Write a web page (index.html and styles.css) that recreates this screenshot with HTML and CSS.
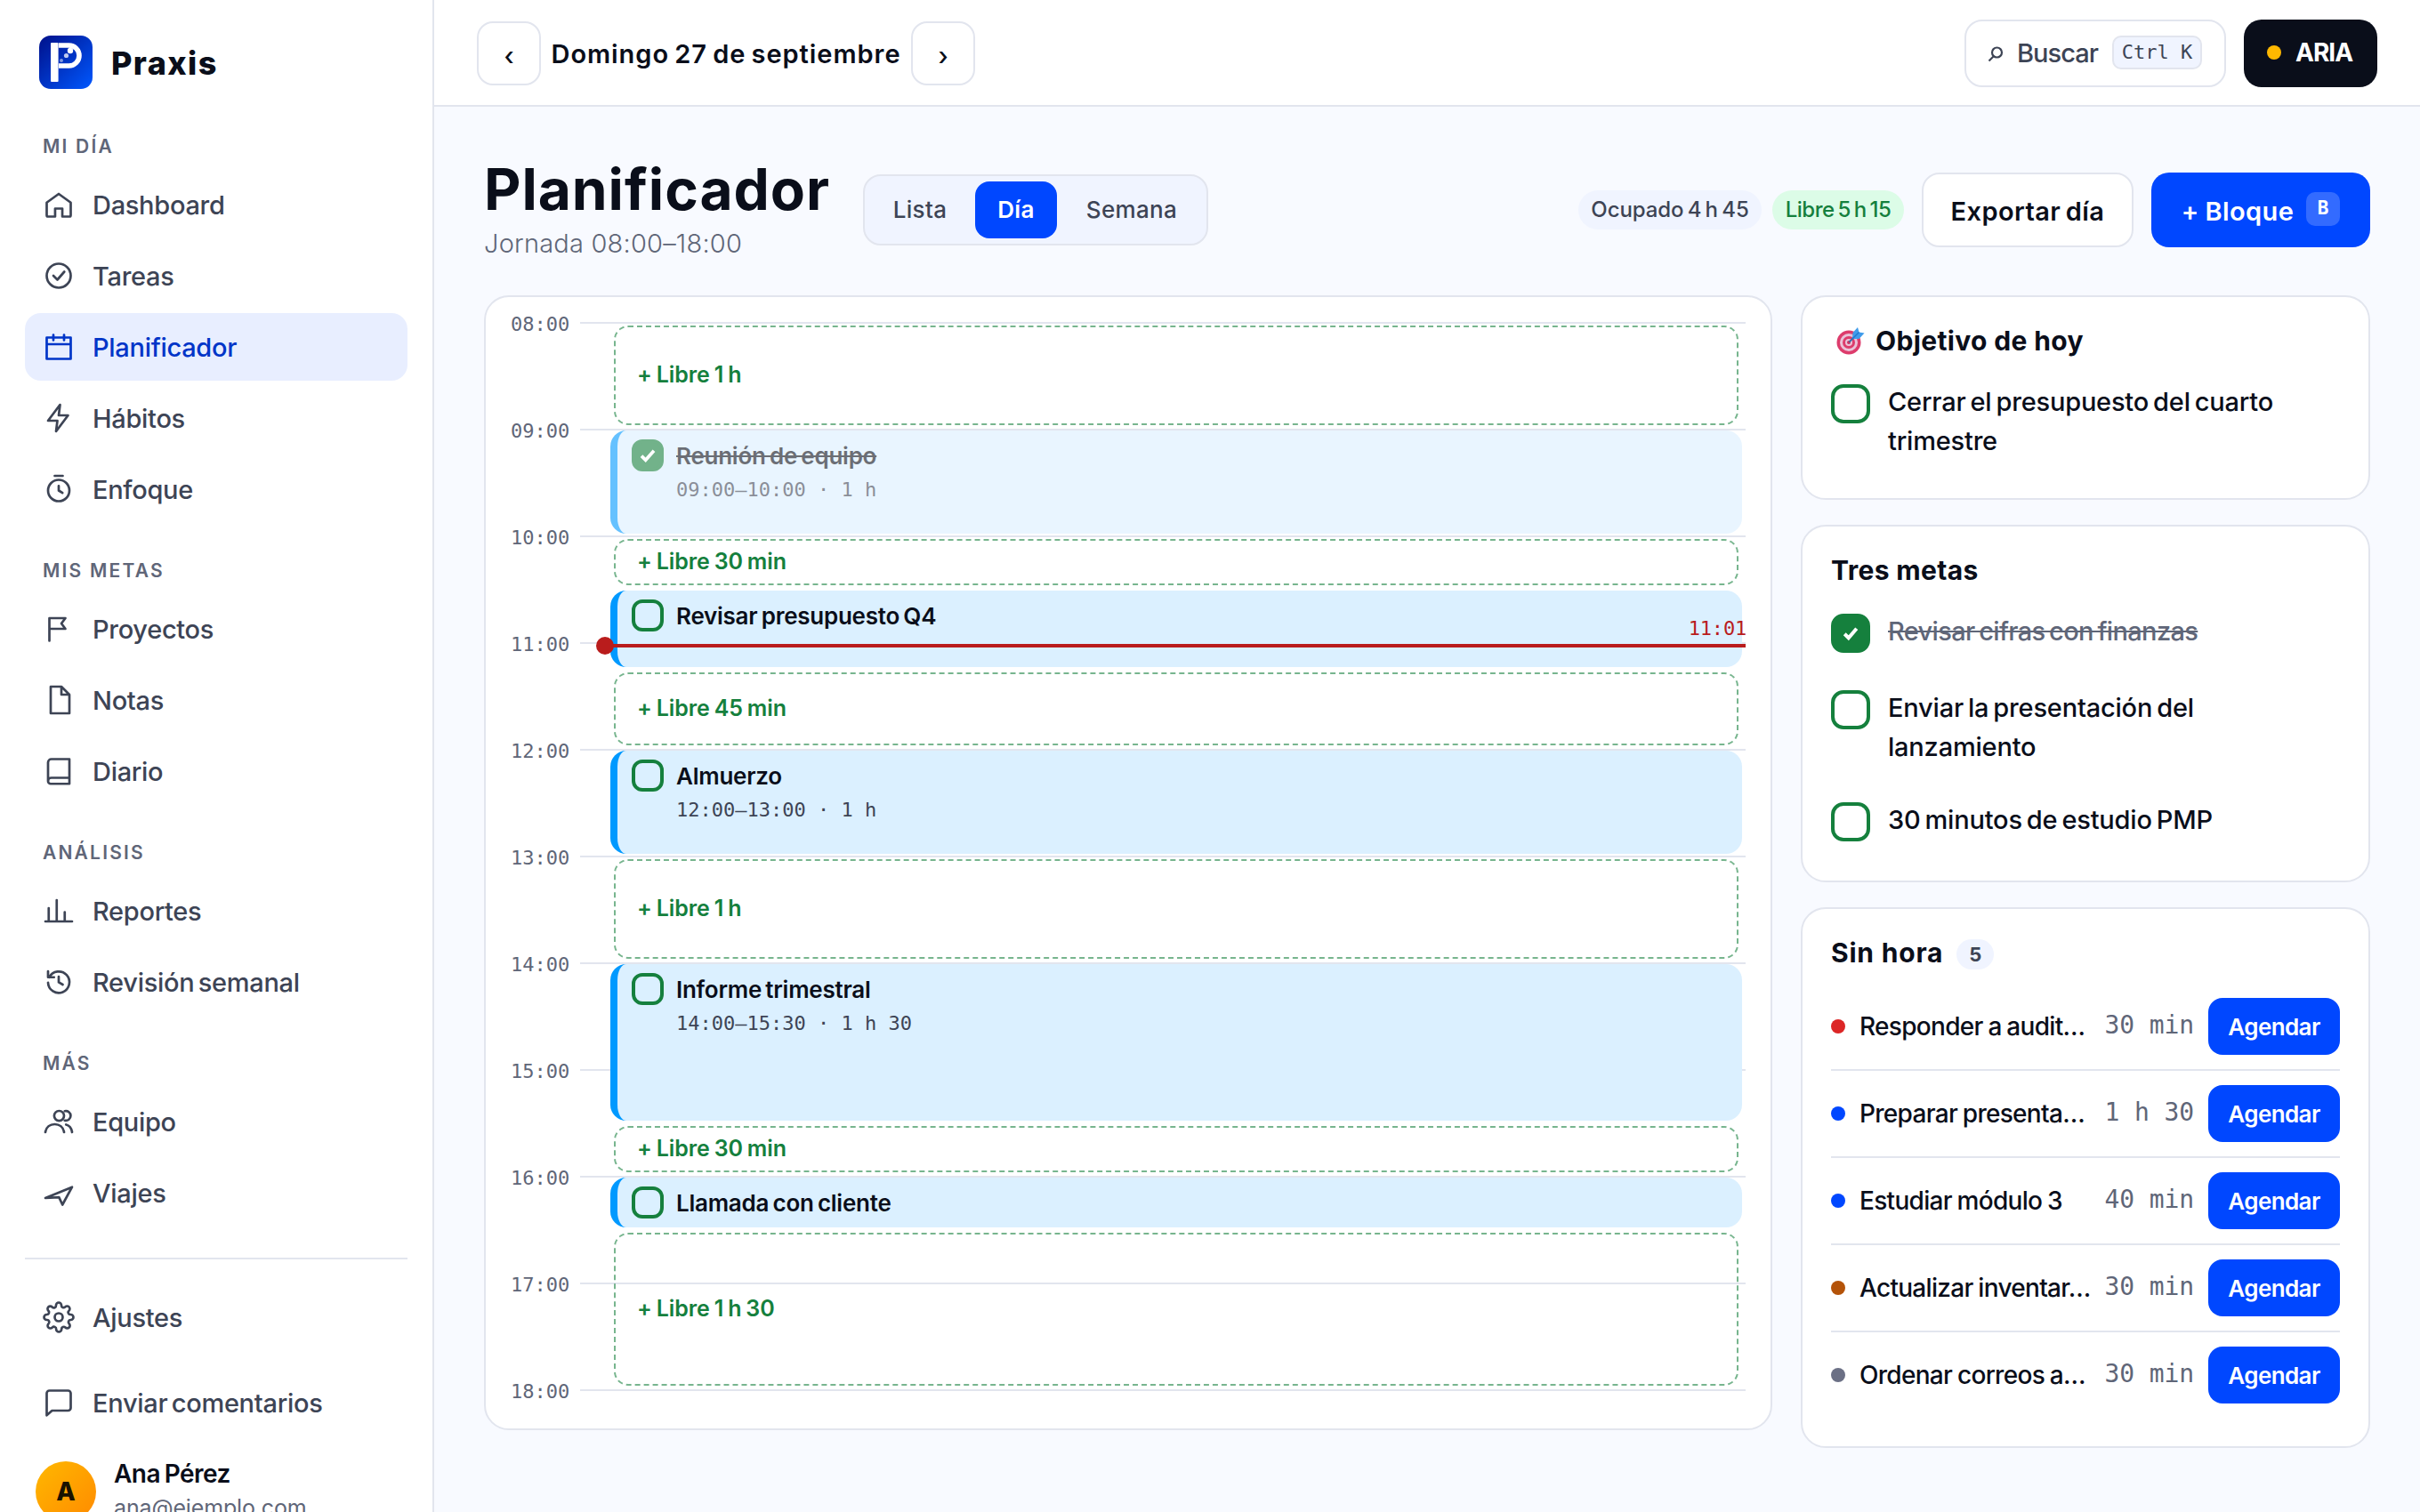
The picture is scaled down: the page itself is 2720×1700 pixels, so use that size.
FILE: index.html
```html
<!DOCTYPE html>
<html lang="es">
<head>
<meta charset="utf-8">
<title>Praxis · Planificador</title>
<link rel="stylesheet" href="styles.css">
</head>
<body>
<div class="app">
  <aside class="sidebar">
    <div class="brand">
      <svg class="brand-mark" viewBox="0 0 60 60" aria-hidden="true">
        <defs><linearGradient id="mark" x1="0" y1="0" x2="1" y2="1"><stop offset="0" stop-color="#00108a"/><stop offset="1" stop-color="#0058ff"/></linearGradient></defs>
        <rect width="60" height="60" rx="13" fill="url(#mark)"/>
        <rect x="13" y="8" width="8.6" height="44" rx="1" fill="#fff"/>
        <path d="M22 11h11.500a11.500 11.500 0 0 1 0 23H22" fill="none" stroke="#fff" stroke-width="5.600"/>
        <circle cx="35" cy="17" r="3.200" fill="#fff"/>
        <circle cx="30.500" cy="22.500" r="2.600" fill="#fff" opacity=".75"/>
        <circle cx="25" cy="28" r="2" fill="#fff" opacity=".5"/>
      </svg>
      <span class="brand-name">Praxis</span>
    </div>

    <h2 class="nav-label">MI DÍA</h2>
    <nav class="nav">
      <a class="nav-item"><svg class="icon" viewBox="0 0 24 24"><path d="M3 10.500 12 4l9 6.500V20a1 1 0 0 1-1 1h-5.300v-6h-5.400v6H4a1 1 0 0 1-1-1z"/></svg>Dashboard</a>
      <a class="nav-item"><svg class="icon" viewBox="0 0 24 24"><circle cx="12" cy="12" r="9"/><path d="m8 12 3 3 5.200-6"/></svg>Tareas</a>
      <a class="nav-item active"><svg class="icon" viewBox="0 0 24 24"><path d="M3 5h18v16H3zM3 10h18M8 3v4M16 3v4"/></svg>Planificador</a>
      <a class="nav-item"><svg class="icon" viewBox="0 0 24 24"><path d="M13 2 4 14h7l-1 8 9-12h-7z"/></svg>Hábitos</a>
      <a class="nav-item"><svg class="icon" viewBox="0 0 24 24"><circle cx="12" cy="13" r="8"/><path d="M9 2h6M12 9.500V13l2.800 1.800"/></svg>Enfoque</a>
    </nav>
    <h2 class="nav-label">MIS METAS</h2>
    <nav class="nav">
      <a class="nav-item"><svg class="icon" viewBox="0 0 24 24"><path d="M5 21V4h12l-3 4 3 4H5"/></svg>Proyectos</a>
      <a class="nav-item"><svg class="icon" viewBox="0 0 24 24"><path d="M14 2H6v20h14V8zM14 2v6h6"/></svg>Notas</a>
      <a class="nav-item"><svg class="icon" viewBox="0 0 24 24"><path d="M4 19.500V5.500A2.500 2.500 0 0 1 6.500 3H20v18.500H6a2 2 0 0 1-2-2A2.500 2.500 0 0 1 6.500 17H20"/></svg>Diario</a>
    </nav>
    <h2 class="nav-label">ANÁLISIS</h2>
    <nav class="nav">
      <a class="nav-item"><svg class="icon" viewBox="0 0 24 24"><path d="M2 20h20M4.500 20V10M10.500 20V4M16.500 20v-7"/></svg>Reportes</a>
      <a class="nav-item"><svg class="icon" viewBox="0 0 24 24"><path d="M4 4v4.500h4.500M4.900 8.500A8 8 0 1 1 4 12.500M12 8v4.300l3 1.700"/></svg>Revisión semanal</a>
    </nav>
    <h2 class="nav-label">MÁS</h2>
    <nav class="nav">
      <a class="nav-item"><svg class="icon" viewBox="0 0 24 24"><circle cx="12.300" cy="7.700" r="3.700"/><path d="M16.500 4.200a3.600 3.600 0 1 1 0 7M2 20c.6-4 3.500-6 7-6s6.400 2 7 6M17.500 14.300c2.500.6 4.100 2.700 4.500 5.700"/></svg>Equipo</a>
      <a class="nav-item"><svg class="icon" viewBox="0 0 24 24"><path d="M2 16 22 7.800 14.800 21l-2.600-5.600z"/></svg>Viajes</a>
    </nav>

    <div class="side-foot">
      <a class="nav-item"><svg class="icon" viewBox="0 0 24 24"><circle cx="12" cy="12" r="3"/><path d="M19.400 15a1.650 1.650 0 0 0 .33 1.820l.06.06a2 2 0 1 1-2.830 2.830l-.06-.06a1.650 1.650 0 0 0-2.800 1.170V21a2 2 0 1 1-4 0v-.09A1.650 1.650 0 0 0 7.200 19.700l-.06.06a2 2 0 1 1-2.830-2.830l.06-.06A1.650 1.650 0 0 0 3.090 14H3a2 2 0 1 1 0-4h.09A1.650 1.650 0 0 0 4.300 7.200l-.06-.06a2 2 0 1 1 2.830-2.830l.06.06A1.650 1.650 0 0 0 10 3.090V3a2 2 0 1 1 4 0v.09a1.650 1.650 0 0 0 2.800 1.210l.06-.06a2 2 0 1 1 2.830 2.830l-.06.06A1.650 1.650 0 0 0 20.910 10H21a2 2 0 1 1 0 4h-.09a1.650 1.650 0 0 0-1.510 1z"/></svg>Ajustes</a>
      <a class="nav-item"><svg class="icon" viewBox="0 0 24 24"><path d="M21 16a2 2 0 0 1-2 2H7l-4 3.500V5a2 2 0 0 1 2-2h14a2 2 0 0 1 2 2z"/></svg>Enviar comentarios</a>
      <div class="user">
        <span class="avatar">A</span>
        <div class="user-text"><span class="user-name">Ana Pérez</span><span class="user-mail">ana@ejemplo.com</span></div>
      </div>
    </div>
  </aside>

  <div class="content">
    <header class="topbar">
      <button class="step">‹</button>
      <span class="date">Domingo 27 de septiembre</span>
      <button class="step">›</button>
      <button class="search">
        <svg class="search-icon" viewBox="0 0 18 18"><circle cx="10.500" cy="7" r="5.500"/><path d="m7 11-5.500 5.500"/></svg>
        <span class="search-text">Buscar</span><kbd class="kbd">Ctrl K</kbd>
      </button>
      <button class="aria"><i class="aria-dot"></i>ARIA</button>
    </header>

    <main class="main">
      <div class="head">
        <div class="head-title">
          <h1 class="title">Planificador</h1>
          <p class="subtitle">Jornada 08:00–18:00</p>
        </div>
        <div class="tabs"><span class="tab">Lista</span><span class="tab on">Día</span><span class="tab">Semana</span></div>
        <div class="pills"><span class="pill busy">Ocupado 4 h 45</span><span class="pill free-time">Libre 5 h 15</span></div>
        <button class="btn export">Exportar día</button>
        <button class="btn primary">+ Bloque <kbd class="key">B</kbd></button>
      </div>

      <div class="columns">
        <section class="card day">
          <div class="grid">
            <div class="hour" style="grid-row:1"><span class="hour-label">08:00</span></div>
            <div class="hour" style="grid-row:5"><span class="hour-label">09:00</span></div>
            <div class="hour" style="grid-row:9"><span class="hour-label">10:00</span></div>
            <div class="hour" style="grid-row:13"><span class="hour-label">11:00</span></div>
            <div class="hour" style="grid-row:17"><span class="hour-label">12:00</span></div>
            <div class="hour" style="grid-row:21"><span class="hour-label">13:00</span></div>
            <div class="hour" style="grid-row:25"><span class="hour-label">14:00</span></div>
            <div class="hour" style="grid-row:29"><span class="hour-label">15:00</span></div>
            <div class="hour" style="grid-row:33"><span class="hour-label">16:00</span></div>
            <div class="hour" style="grid-row:37"><span class="hour-label">17:00</span></div>
            <div class="hour" style="grid-row:41"><span class="hour-label">18:00</span></div>

            <div class="slot" style="grid-row:1/5">+ Libre 1 h</div>
            <div class="event done" style="grid-row:5/9">
              <span class="check small checked"><svg viewBox="0 0 24 24"><path d="m6 12.500 4 4 8-9"/></svg></span>
              <div class="event-text"><span class="event-title">Reunión de equipo</span><span class="event-time">09:00–10:00 · 1 h</span></div>
            </div>
            <div class="slot" style="grid-row:9/11">+ Libre 30 min</div>
            <div class="event" style="grid-row:11/14">
              <span class="check small"></span>
              <div class="event-text"><span class="event-title">Revisar presupuesto Q4</span></div>
            </div>
            <div class="slot" style="grid-row:14/17">+ Libre 45 min</div>
            <div class="event" style="grid-row:17/21">
              <span class="check small"></span>
              <div class="event-text"><span class="event-title">Almuerzo</span><span class="event-time">12:00–13:00 · 1 h</span></div>
            </div>
            <div class="slot" style="grid-row:21/25">+ Libre 1 h</div>
            <div class="event" style="grid-row:25/31">
              <span class="check small"></span>
              <div class="event-text"><span class="event-title">Informe trimestral</span><span class="event-time">14:00–15:30 · 1 h 30</span></div>
            </div>
            <div class="slot" style="grid-row:31/33">+ Libre 30 min</div>
            <div class="event" style="grid-row:33/35">
              <span class="check small"></span>
              <div class="event-text"><span class="event-title">Llamada con cliente</span></div>
            </div>
            <div class="slot" style="grid-row:35/41">+ Libre 1 h 30</div>
            <div class="now" style="top:362px"><span class="now-time">11:01</span></div>
          </div>
        </section>

        <div class="side">
          <section class="card panel">
            <h3 class="panel-title">
              <svg class="target" viewBox="0 0 34 34" aria-hidden="true"><circle cx="15" cy="19" r="13.500" fill="#dd3c6c"/><circle cx="15" cy="19" r="10" fill="#e9c3d8"/><circle cx="15" cy="19" r="7" fill="#dd3c6c"/><circle cx="15" cy="19" r="4" fill="#e9c3d8"/><circle cx="15" cy="19" r="2" fill="#c93463"/><path d="M15.500 18.500 26 8" stroke="#3b6fa8" stroke-width="2"/><path d="m19 15 .5-7L25 2l1.500 5.500L32.500 8.500 26.500 15z" fill="#3f9bea"/><path d="m19 15 7.500-7.500" stroke="#1f78cf" stroke-width="1.500"/></svg>
              Objetivo de hoy</h3>
            <div class="goal"><span class="check"></span><span class="goal-text">Cerrar el presupuesto del cuarto<br>trimestre</span></div>
          </section>

          <section class="card panel">
            <h3 class="panel-title">Tres metas</h3>
            <div class="goal crossed"><span class="check checked"><svg viewBox="0 0 24 24"><path d="m7.500 12.500 3 3 6-7"/></svg></span><span class="goal-text">Revisar cifras con finanzas</span></div>
            <div class="goal"><span class="check"></span><span class="goal-text">Enviar la presentación del<br>lanzamiento</span></div>
            <div class="goal"><span class="check"></span><span class="goal-text">30 minutos de estudio PMP</span></div>
          </section>

          <section class="card panel backlog">
            <h3 class="panel-title">Sin hora <span class="count">5</span></h3>
            <div class="task"><i class="dot red"></i><span class="task-name">Responder a audit…</span><span class="task-time">30 min</span><button class="schedule">Agendar</button></div>
            <div class="task"><i class="dot blue"></i><span class="task-name">Preparar presenta…</span><span class="task-time">1 h 30</span><button class="schedule">Agendar</button></div>
            <div class="task"><i class="dot blue"></i><span class="task-name">Estudiar módulo 3</span><span class="task-time">40 min</span><button class="schedule">Agendar</button></div>
            <div class="task"><i class="dot amber"></i><span class="task-name">Actualizar inventar…</span><span class="task-time">30 min</span><button class="schedule">Agendar</button></div>
            <div class="task"><i class="dot gray"></i><span class="task-name">Ordenar correos a…</span><span class="task-time">30 min</span><button class="schedule">Agendar</button></div>
          </section>
        </div>
      </div>
    </main>
  </div>
</div>
</body>
</html>
```
FILE: styles.css
```css
:root {
  --ink: #0a0e1a;
  --text: #3d4455;
  --muted: #5f6678;
  --line: #e2e5ee;
  --primary: #0047ff;
  --green: #15803d;
  --tint: #f0f4ff;
  --mono: "DejaVu Sans Mono", "Liberation Mono", monospace;
}

* { box-sizing: border-box; }

body {
  margin: 0;
  background: #f8faff;
  color: var(--ink);
  font-family: Inter, "Liberation Sans", sans-serif;
  font-size: 29px;
}

button, kbd { font: inherit; color: inherit; }
h1, h2, h3, p { margin: 0; }

.app { display: flex; height: 1700px; overflow: hidden; }

/* Sidebar */
.sidebar {
  flex: none;
  display: flex;
  flex-direction: column;
  width: 488px;
  padding: 40px 28px 0;
  background: #fff;
  border-right: 2px solid var(--line);
}
.brand { display: flex; align-items: center; gap: 21px; height: 60px; padding-left: 16px; margin-bottom: 11.2px; }
.brand-mark { width: 60px; height: 60px; }
.brand-name { padding-top: 1px; font-size: 36px; font-weight: 800; letter-spacing: 1.4px; }
.nav-label {
  flex: none;
  height: 81px;
  padding: 39.5px 0 0 20px;
  color: var(--muted);
  font-size: 21px;
  font-weight: 600;
  line-height: 28px;
  letter-spacing: 2.2px;
}
.nav { flex: none; display: flex; flex-direction: column; gap: 4px; }
.nav-item {
  flex: none;
  display: flex;
  align-items: center;
  gap: 20px;
  height: 76px;
  padding: 0 20px;
  border-radius: 18px;
  color: var(--text);
  font-weight: 500;
  letter-spacing: -.3px;
  word-spacing: -3px;
}
.nav-item.active { background: #e8eeff; color: #0035c8; }
.icon {
  width: 36px;
  height: 36px;
  fill: none;
  stroke: currentColor;
  stroke-width: 1.8;
  stroke-linecap: round;
  stroke-linejoin: round;
}
.side-foot { flex: none; margin-top: 35px; padding-top: 17px; border-top: 2px solid var(--line); }
.side-foot .nav-item { height: 96px; }
.user { display: flex; align-items: flex-start; gap: 20px; padding: 18px 12px 0; }
.avatar {
  display: grid;
  place-items: center;
  width: 68px;
  height: 68px;
  border-radius: 50%;
  background: linear-gradient(135deg, #ffb800, #ff8a00);
  color: #1a1200;
  font-size: 28px;
  font-weight: 800;
}
.user-text { display: flex; flex-direction: column; margin-top: -5px; }
.user-name { font-size: 28px; font-weight: 600; line-height: 38px; letter-spacing: -.5px; word-spacing: -2px; }
.user-mail { color: var(--muted); font-size: 25px; line-height: 39px; letter-spacing: -.15px; }

/* Top bar */
.content { flex: 1; display: flex; flex-direction: column; min-width: 0; }
.topbar {
  flex: none;
  display: flex;
  align-items: center;
  height: 120px;
  padding: 2px 48px 0;
  background: #fff;
  border-bottom: 2px solid var(--line);
}
.step {
  width: 72px;
  height: 72px;
  padding: 5px 0 0;
  background: #fff;
  border: 2px solid var(--line);
  border-radius: 18px;
  font-size: 28px;
  font-weight: 500;
}
.date { width: 416px; padding-top: 1px; text-align: center; font-weight: 600; letter-spacing: .95px; word-spacing: -2px; white-space: nowrap; }
.search {
  display: flex;
  align-items: center;
  gap: 16px;
  width: 294px;
  height: 76px;
  margin-left: auto;
  padding: 0 24px 2px;
  background: #fff;
  border: 2px solid var(--line);
  border-radius: 20px;
  color: var(--text);
}
.search-icon { flex: none; width: 18px; height: 18px; margin: 3px -1px 0 0; fill: none; stroke: currentColor; stroke-width: 2.2; }
.search-text { width: 91px; font-weight: 500; letter-spacing: -1px; }
.kbd {
  width: 101px;
  height: 38px;
  background: var(--tint);
  border: 2px solid var(--line);
  border-radius: 10px;
  font-family: var(--mono);
  font-size: 22px;
  line-height: 33px;
  text-align: center;
}
.aria {
  display: flex;
  align-items: center;
  gap: 16px;
  width: 150px;
  height: 76px;
  margin-left: 20px;
  padding: 0 26px 2px;
  background: #0a0e1a;
  border: 0;
  border-radius: 20px;
  color: #fff;
  font-weight: 700;
  font-size: 28px;
  letter-spacing: -1px;
}
.aria-dot { flex: none; width: 16px; height: 16px; border-radius: 50%; background: #ffb800; }

/* Page header */
.main { padding: 57px 56px 0; }
.head { display: flex; align-items: center; height: 118px; margin-bottom: 37px; }
.head-title { width: 426px; }
.title { font-size: 64px; font-weight: 700; line-height: 71px; letter-spacing: .95px; }
.subtitle { margin-top: 4px; color: var(--muted); font-weight: 300; line-height: 44px; letter-spacing: .2px; white-space: nowrap; }
.tabs {
  display: flex;
  gap: 6px;
  width: 388px;
  height: 80px;
  padding: 6px;
  background: var(--tint);
  border: 2px solid var(--line);
  border-radius: 20px;
}
.tab {
  width: 112px;
  border-radius: 16px;
  color: var(--text);
  font-size: 26px;
  font-weight: 500;
  letter-spacing: .35px;
  line-height: 64px;
  text-align: center;
}
.tab:last-child { width: 156px; }
.tab.on { width: 92px; background: var(--primary); color: #fff; font-weight: 600; }
.pills { display: flex; gap: 12px; margin-left: auto; }
.pill { height: 44px; border-radius: 22px; font-size: 24px; font-weight: 500; line-height: 44px; text-align: center; white-space: nowrap; }
.busy { width: 206px; background: var(--tint); color: var(--text); letter-spacing: -.1px; word-spacing: -2px; }
.free-time { width: 148px; background: #dcfce7; color: var(--green); letter-spacing: -.5px; word-spacing: -2px; }
.btn { height: 84px; padding: 0; border-radius: 20px; font-weight: 600; white-space: nowrap; }
.export { width: 238px; margin-left: 20px; padding-top: 2px; background: #fff; border: 2px solid var(--line); letter-spacing: .4px; word-spacing: -2px; }
.primary {
  display: flex;
  align-items: center;
  justify-content: center;
  gap: 14px;
  width: 246px;
  margin-left: 20px;
  padding-top: 2px;
  background: var(--primary);
  border: 0;
  color: #fff;
  letter-spacing: .4px;
  word-spacing: -1px;
}
.key {
  width: 38px;
  height: 38px;
  margin-top: -5px;
  border-radius: 10px;
  background: rgba(255, 255, 255, .2);
  font-family: var(--mono);
  font-size: 21px;
  line-height: 37px;
  letter-spacing: 0;
}

/* Layout */
.columns { display: grid; grid-template-columns: 1448px 640px; gap: 32px; align-items: start; }
.card { background: #fff; border: 2px solid var(--line); border-radius: 28px; }

/* Day timeline: one row per quarter hour */
.day { padding: 28px 28px 44px; }
.grid { position: relative; display: grid; grid-template-columns: 1fr; grid-template-rows: repeat(40, 30px) 0; }
.hour { grid-column: 1; display: flex; align-items: center; height: 2px; }
.hour::after { content: ""; flex: 1; height: 2px; background: var(--line); }
.hour-label { width: 78px; margin-top: 3px; color: var(--muted); font-family: var(--mono); font-size: 22px; line-height: 30px; }
.slot {
  grid-column: 1;
  position: relative;
  display: flex;
  align-items: center;
  margin: 4px 8px 4px 116px;
  padding: 0 24px 2px;
  border: 2px dashed rgba(21, 128, 61, .58);
  border-radius: 16px;
  color: var(--green);
  font-size: 25px;
  font-weight: 600;
  letter-spacing: -.1px;
  word-spacing: -1.2px;
}
.event {
  grid-column: 1;
  position: relative;
  display: flex;
  gap: 14px;
  margin: 2px 4px 2px 112px;
  padding: 10px 16px;
  background: #dbf0ff;
  border-left: 8px solid #0099ff;
  border-radius: 18px;
}
.event.done { opacity: .6; }
.event-text { display: flex; flex-direction: column; margin-top: 1px; }
.event-title { font-size: 26px; font-weight: 600; line-height: 36px; letter-spacing: -.25px; word-spacing: -2px; }
.done .event-title { text-decoration: line-through; }
.event-time { margin-top: 5px; color: var(--text); font-family: var(--mono); font-size: 22px; line-height: 30px; }
.now { position: absolute; left: 106px; right: 0; height: 4px; background: #b91c1c; }
.now::before { content: ""; position: absolute; left: -10px; top: -8px; width: 20px; height: 20px; border-radius: 50%; background: #b91c1c; }
.now-time { position: absolute; right: -1px; bottom: 6px; color: #b91c1c; font-family: var(--mono); font-size: 22px; line-height: 30px; letter-spacing: -.2px; }

/* Checkboxes */
.check {
  flex: none;
  width: 44px;
  height: 44px;
  border: 4px solid var(--green);
  border-radius: 14px;
}
.check.small { width: 36px; height: 36px; border-radius: 12px; }
.check.checked { background: var(--green); }
.check svg { display: block; width: 100%; height: 100%; fill: none; stroke: #fff; stroke-width: 2.7; }
.check.small svg { stroke-width: 3.2; }

/* Right column */
.side { display: flex; flex-direction: column; gap: 28px; }
.panel { padding: 28px 32px 44px; }
.panel-title { display: flex; align-items: center; height: 42px; margin-bottom: 25px; font-size: 30px; font-weight: 700; letter-spacing: .35px; white-space: nowrap; }
.target { width: 34px; height: 34px; margin: 0 11px 0 5px; }
.goal { display: flex; gap: 20px; min-height: 47px; }
.goal + .goal { margin-top: 39px; }
.goal .check { margin-top: 3px; }
.goal-text { padding-top: 1px; margin-bottom: -1px; font-weight: 500; line-height: 43.5px; letter-spacing: -.2px; word-spacing: -2.5px; white-space: nowrap; }
.crossed .goal-text { color: var(--muted); text-decoration: line-through; letter-spacing: -.65px; }
.backlog { padding-bottom: 32px; }
.backlog .panel-title { margin-bottom: 14px; letter-spacing: .8px; }
.count {
  width: 42px;
  height: 34px;
  margin: 3px 0 0 15px;
  border-radius: 17px;
  background: var(--tint);
  color: var(--text);
  font-size: 22px;
  line-height: 34px;
  letter-spacing: 0;
  text-align: center;
}
.task { display: flex; align-items: center; height: 98px; border-bottom: 2px solid var(--line); }
.task:last-child { border-bottom: 0; height: 96px; }
.dot { flex: none; width: 16px; height: 16px; border-radius: 50%; }
.red { background: #dc2626; }
.blue { background: var(--primary); }
.amber { background: #b45309; }
.gray { background: #6b7085; }
.task-name { flex: 1; padding-left: 16px; font-size: 28px; font-weight: 500; letter-spacing: -.7px; word-spacing: -1px; white-space: nowrap; }
.task-time { margin: -4px 16px 0 0; color: var(--muted); font-family: var(--mono); font-size: 28px; letter-spacing: -.1px; white-space: pre; }
.schedule {
  width: 148px;
  height: 64px;
  padding: 1px 0 0;
  background: var(--primary);
  border: 0;
  border-radius: 16px;
  color: #fff;
  font-size: 26px;
  font-weight: 600;
  letter-spacing: -.6px;
}
```
